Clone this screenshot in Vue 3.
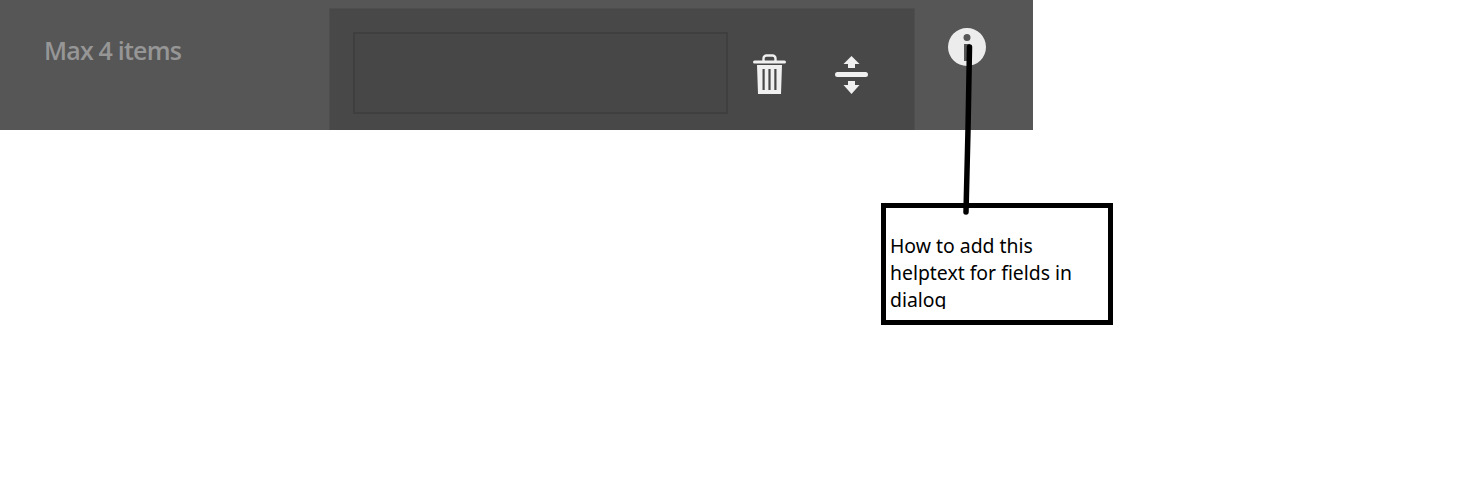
<script setup>
</script>

<template>
  <div class="page">
    <div class="bar">
      <div class="label">Max 4 items</div>
      <div class="panel">
        <div class="field"></div>
        <button class="tool trash" aria-label="Delete">
          <svg width="33" height="40" viewBox="0 0 33 40">
            <path d="M1.500 8H31.500" stroke="#f0f0f0" stroke-width="3" stroke-linecap="round" fill="none" />
            <path d="M10.500 7V4.500A3 3 0 0 1 13.500 1.500H19.500A3 3 0 0 1 22.500 4.500V7" stroke="#f0f0f0" stroke-width="2.400" fill="none" />
            <path fill-rule="evenodd" fill="#f0f0f0" d="M4 11H29L28 40H5ZM9.500 15V36H11.700V15ZM15.400 15V36H17.600V15ZM21.300 15V36H23.500V15Z" />
          </svg>
        </button>
        <button class="tool move" aria-label="Reorder">
          <svg width="33" height="40" viewBox="0 0 33 40">
            <path fill="#f0f0f0" d="M16.500 1L24.500 9H20V13H13V9H8.500ZM2.500 17H30.500A2.500 2.500 0 0 1 30.500 22H2.500A2.500 2.500 0 0 1 2.500 17ZM13 26H20V30H24.500L16.500 39L8.500 30H13Z" />
          </svg>
        </button>
      </div>
      <div class="info-cell">
        <svg width="38" height="38" viewBox="0 0 38 38" aria-label="Info">
          <path fill="#ececec" fill-rule="evenodd" d="M19 0A19 19 0 1 1 19 38A19 19 0 1 1 19 0ZM19 6A3.500 3.500 0 1 0 19 13A3.500 3.500 0 1 0 19 6ZM16 16V33H22V16Z" />
        </svg>
      </div>
    </div>

    <div class="note">
      <p>How to add this helptext for fields in dialog</p>
    </div>

    <svg class="pointer" width="12" height="176" viewBox="0 0 12 176">
      <path d="M8.500 5L7 88L5 170" stroke="#000" stroke-width="5.500" stroke-linecap="round" fill="none" />
    </svg>
  </div>
</template>

<style>
html, body { background: #fff; }
</style>

<style scoped>
.page {
  position: relative;
  width: 1472px;
  height: 503px;
  overflow: hidden;
  background: #fff;
}
.bar {
  display: flex;
  width: 1033px;
  height: 130px;
  background: #565656;
}
.label {
  width: 329px;
  padding: 33px 0 0 44px;
  box-sizing: border-box;
  font-family: "Open Sans", sans-serif;
  font-size: 25px;
  font-weight: 600;
  line-height: 34px;
  letter-spacing: -0.8px;
  color: #969696;
}
.panel {
  display: flex;
  align-items: flex-start;
  width: 586px;
  margin-top: 8px;
  padding-top: 23px;
  box-sizing: border-box;
  padding-left: 23px;
  background: #484848;
  border: 1px solid #4e4e4e;
  border-bottom: 0;
}
.field {
  width: 375px;
  height: 82px;
  box-sizing: border-box;
  border: 2px solid #3f3f3f;
  background: #474747;
}
.tool {
  display: block;
  padding: 0;
  border: 0;
  background: none;
}
.tool svg { display: block; }
.trash { margin: 22px 0 0 25px; }
.move { margin: 23px 0 0 49px; }
.info-cell {
  padding: 28px 0 0 33px;
}
.info-cell svg { display: block; }
.note {
  width: 232px;
  height: 122px;
  box-sizing: border-box;
  margin: 73px 0 0 881px;
  padding: 24px 0 0 4px;
  border: 5px solid #000;
  background: #fff;
}
.note p {
  margin: 0;
  height: 77px;
  overflow: hidden;
  font-family: "Noto Sans", sans-serif;
  font-size: 19.400px;
  line-height: 27px;
  color: #000;
}
.pointer {
  position: absolute;
  left: 961px;
  top: 42px;
}
</style>
